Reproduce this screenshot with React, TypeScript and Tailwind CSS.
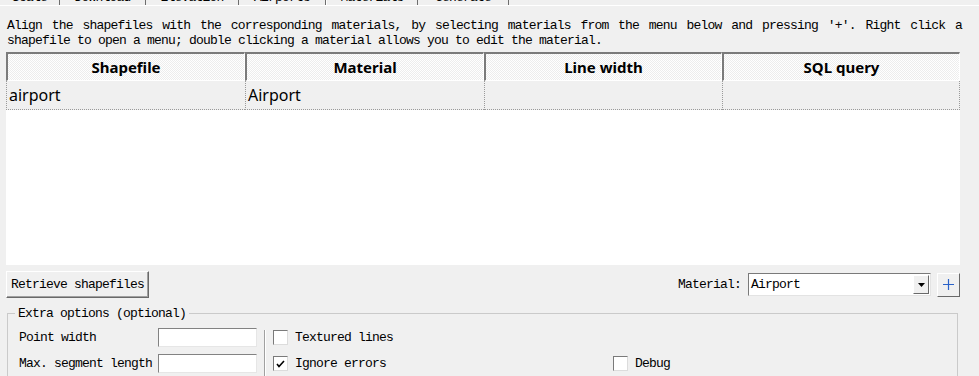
import React from "react";

const mono = "font-['Liberation_Mono',monospace] text-[13px] tracking-[-0.8px] text-black";

const tabs = [
    { label: "Scale", w: "w-[60px]" },
    { label: "Download", w: "w-[86px]" },
    { label: "Elevation", w: "w-[93px]" },
    { label: "Airports", w: "w-[87px]" },
    { label: "Materials", w: "w-[92px]", active: true },
    { label: "Generate", w: "w-[91px]" },
];

const columns = ["Shapefile", "Material", "Line width", "SQL query"];
const colWidths = ["w-[239px]", "w-[239px]", "w-[238px]", "w-[238px]"];

const Checkbox = ({ checked }: { checked?: boolean }) => (
    <div className="w-[15px] h-[15px] border border-t-[#7a7a7a] border-l-[#7a7a7a] border-r-[#dcdcdc] border-b-[#dcdcdc] bg-white flex items-center justify-center">
        {checked && (
            <svg width="9" height="8" viewBox="0 0 9 8">
                <path d="M1 4 L3 6.5 L8 1" stroke="#000" strokeWidth="1.6" fill="none" />
            </svg>
        )}
    </div>
);

const TextInput = () => (
    <div className="w-[99px] h-[19px] bg-white border border-t-[#828282] border-l-[#828282] border-r-[#e6e6e6] border-b-[#e6e6e6]" />
);

const App = () => {
    return (
        <div className="w-[979px] h-[376px] bg-[#f0f0f0] overflow-hidden flex flex-col">
            {/* tab strip, mostly scrolled off the top */}
            <div className="h-[6px] shrink-0 flex border-b border-white overflow-hidden">
                {tabs.map((t) => (
                    <div
                        key={t.label}
                        className={`${t.w} h-[6px] shrink-0 border-r border-[#6e6e6e] flex justify-center overflow-hidden ${t.active ? "bg-[#f0f0f0] border-l border-l-white" : ""}`}
                    >
                        <span className={`${mono} leading-[15px] -mt-[10px]`}>{t.label}</span>
                    </div>
                ))}
            </div>

            {/* description */}
            <div className={`${mono} shrink-0 mt-[12px] pl-[7px] pr-[17px] leading-[15px]`}>
                <div className="[text-align-last:justify]">
                    Align the shapefiles with the corresponding materials, by selecting materials from the menu below and pressing '+'. Right click a
                </div>
                <div>shapefile to open a menu; double clicking a material allows you to edit the material.</div>
            </div>

            {/* table */}
            <div className="shrink-0 mt-[4px] ml-[6px] w-[954px] h-[213px] bg-white flex flex-col">
                <div className="flex h-[29px] shrink-0">
                    {columns.map((c, i) => (
                        <div
                            key={c}
                            className={`${colWidths[i]} h-[29px] box-border border-t-2 border-l-2 border-[#7b7b7b] border-r border-r-white border-b border-b-white bg-[repeating-conic-gradient(#ffffff_0_25%,#ededed_0_50%)] bg-[length:2px_2px] flex items-center justify-center font-['Noto_Sans',sans-serif] font-bold text-[15px] text-black`}
                        >
                            {c}
                        </div>
                    ))}
                </div>
                <div className="flex h-[29px] shrink-0 bg-[#f0f0f0]">
                    {["airport", "Airport", "", ""].map((v, i) => (
                        <div
                            key={i}
                            className={`${colWidths[i]} h-[29px] box-border border-l border-b border-dotted border-[#9a9a9a] ${i === 3 ? "border-r" : ""} pl-[2px] flex items-center font-['Noto_Sans',sans-serif] text-[16px] text-black`}
                        >
                            {v}
                        </div>
                    ))}
                </div>
            </div>

            {/* controls */}
            <div className="shrink-0 mt-[6px] h-[27px] flex items-center pl-[6px] pr-[19px]">
                <button className={`${mono} h-[27px] w-[143px] bg-[#f0f0f0] border border-t-white border-l-white border-r-[#696969] border-b-[#696969] shadow-[inset_-1px_-1px_0_#a0a0a0] text-center`}>
                    Retrieve shapefiles
                </button>
                <div className="flex-1" />
                <span className={`${mono} mr-[7px]`}>Material:</span>
                <div className="w-[183px] h-[23px] bg-white border border-t-[#7a7a7a] border-l-[#7a7a7a] border-r-[#e3e3e3] border-b-[#e3e3e3] flex items-center">
                    <span className={`${mono} pl-[2px] flex-1`}>Airport</span>
                    <div className="w-[16px] h-[19px] mr-[1px] bg-[#f0f0f0] border border-t-white border-l-white border-r-[#696969] border-b-[#696969] flex items-center justify-center">
                        <svg width="7" height="4" viewBox="0 0 7 4">
                            <path d="M0 0 L7 0 L3.5 4 Z" fill="#000" />
                        </svg>
                    </div>
                </div>
                <button className="ml-[6px] w-[23px] h-[24px] bg-[#f0f0f0] border border-t-white border-l-white border-r-[#696969] border-b-[#696969] flex items-center justify-center">
                    <svg width="11" height="11" viewBox="0 0 11 11">
                        <path d="M5.5 0 V11 M0 5.5 H11" stroke="#2a62c9" strokeWidth="1.2" />
                    </svg>
                </button>
            </div>

            {/* extra options group */}
            <div className="relative shrink-0 mt-[15px] ml-[7px] w-[951px] h-[80px] border border-[#cacaca] border-b-0 pt-[14px]">
                <span className={`${mono} absolute -top-[8px] left-[7px] bg-[#f0f0f0] px-[3px] leading-[15px]`}>
                    Extra options (optional)
                </span>
                <div className="flex pl-[11px]">
                    <div className="flex flex-col gap-[7px]">
                        <div className="h-[19px] flex items-center">
                            <span className={`${mono} w-[139px]`}>Point width</span>
                            <TextInput />
                        </div>
                        <div className="h-[19px] flex items-center">
                            <span className={`${mono} w-[139px]`}>Max. segment length</span>
                            <TextInput />
                        </div>
                    </div>
                    <div className="ml-[7px] mt-[2px] w-[2px] h-[60px] border-l border-[#a0a0a0] border-r border-r-white" />
                    <div className="ml-[7px] grid grid-cols-[340px_200px] gap-y-[7px] auto-rows-[19px]">
                        <div className="flex items-center gap-[7px]">
                            <Checkbox />
                            <span className={mono}>Textured lines</span>
                        </div>
                        <div />
                        <div className="flex items-center gap-[7px]">
                            <Checkbox checked />
                            <span className={mono}>Ignore errors</span>
                        </div>
                        <div className="flex items-center gap-[7px]">
                            <Checkbox />
                            <span className={mono}>Debug</span>
                        </div>
                    </div>
                </div>
            </div>
        </div>
    );
};

export default App;
